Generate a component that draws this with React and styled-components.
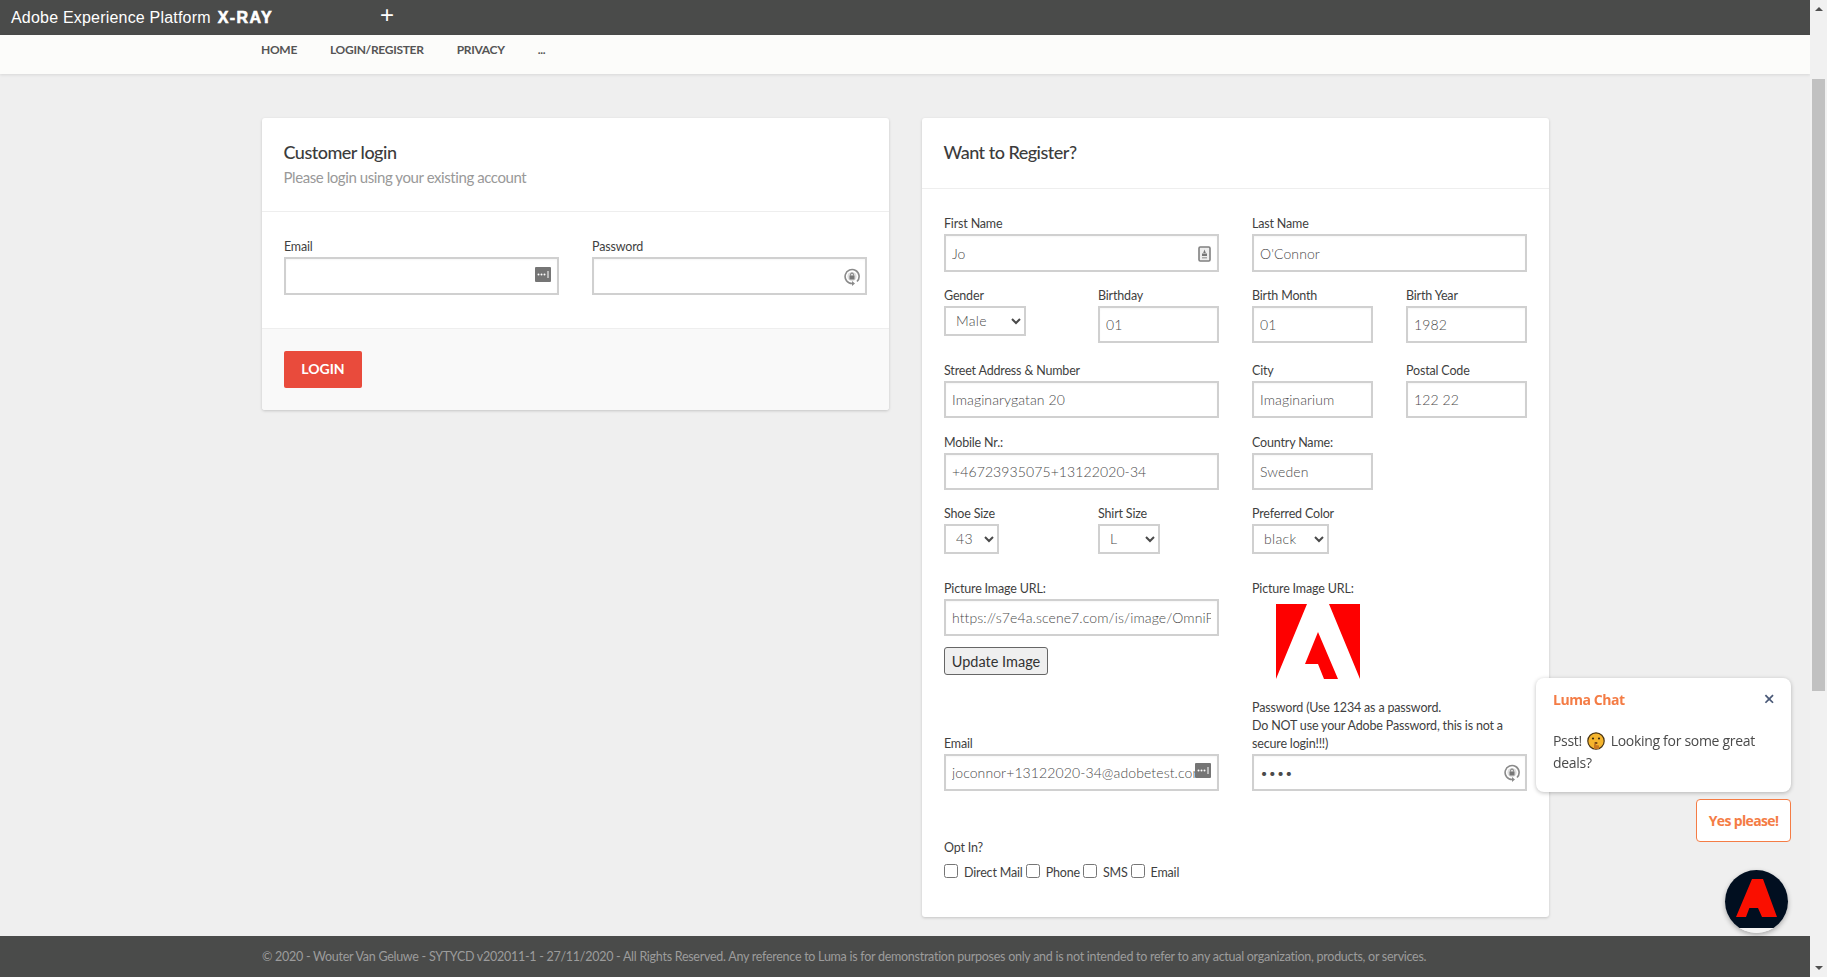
import React from "react";
import styled, { createGlobalStyle } from "styled-components";

const GlobalStyle = createGlobalStyle`
  html, body {
    margin: 0;
    height: 100%;
    overflow: hidden;
  }
  * {
    box-sizing: border-box;
  }
  body {
    font-family: "Lato", "Open Sans", sans-serif;
    background: #efefef;
  }
`;

const Shell = styled.div`
  display: flex;
  height: 100vh;
`;

const Main = styled.div`
  flex: 1;
  min-width: 0;
  display: flex;
  flex-direction: column;
`;

const TopBar = styled.div`
  height: 35px;
  flex: none;
  background: #4a4b4a;
  color: #fff;
  display: flex;
  align-items: center;
  padding-left: 11px;
  font-family: "Liberation Sans", sans-serif;
  font-size: 16px;
  letter-spacing: 0.2px;
  white-space: pre;
`;

const XRay = styled.b`
  margin-left: 7px;
  letter-spacing: 1.4px;
  -webkit-text-stroke: 0.6px #fff;
`;

const PlusIcon = styled.span`
  margin-left: 107px;
  margin-top: -6px;
  font-size: 24px;
  font-weight: 300;
  line-height: 1;
`;

const Nav = styled.nav`
  height: 39px;
  flex: none;
  background: #fcfcfa;
  box-shadow: 0 1px 3px rgba(0, 0, 0, 0.1);
  padding: 7px 0 0 261px;
  display: flex;
  gap: 33px;
  position: relative;
`;

const NavLink = styled.a`
  font-size: 12px;
  font-weight: 700;
  line-height: 16px;
  letter-spacing: -0.3px;
  color: #555;
`;

const Content = styled.main`
  flex: 1;
  display: flex;
  align-items: flex-start;
  gap: 33px;
  padding: 44px 0 0 262px;
`;

const Card = styled.section`
  width: 627px;
  flex: none;
  background: #fff;
  border-radius: 3px;
  box-shadow: 0 1px 3px rgba(0, 0, 0, 0.18);
`;

const CardHeader = styled.header`
  height: ${p => p.$height}px;
  padding: 22px 22px 0 21.5px;
  border-bottom: 1px solid #eee;
`;

const CardTitle = styled.h2`
  margin: 0;
  font-size: 18px;
  font-weight: 500;
  line-height: 24px;
  color: #3c3c3c;
  letter-spacing: -0.5px;
`;

const CardSub = styled.p`
  margin: 2px 0 0;
  font-size: 15px;
  line-height: 22px;
  color: #999;
  letter-spacing: -0.42px;
`;

const LoginBody = styled.div`
  padding: 25px 22px 33px;
  display: grid;
  grid-template-columns: 275px 275px;
  gap: 33px;
`;

const LoginFooter = styled.div`
  height: 82px;
  padding: 22px 22px 0;
  background: #f9f9f9;
  border-top: 1px solid #eee;
  border-radius: 0 0 3px 3px;
`;

const LoginButton = styled.button`
  width: 78px;
  height: 37px;
  background: #e94b3c;
  color: #fff;
  border: 0;
  border-radius: 2px;
  font-family: inherit;
  font-size: 14px;
  font-weight: 700;
  padding: 0 0 3px;
`;

const RegisterBody = styled.form`
  padding: 25px 22px 0;
  height: 728px;
`;

const FormRow = styled.div`
  display: grid;
  grid-template-columns: repeat(4, 121px);
  column-gap: 33px;
  align-items: ${p => p.$align || "start"};
  margin-top: ${p => p.$top || 0}px;
`;

const Field = styled.div`
  grid-column: span ${p => p.$span || 1};
  position: relative;
`;

const Label = styled.label`
  display: block;
  font-size: 12.5px;
  line-height: 18px;
  letter-spacing: -0.17px;
  color: #3f3f3f;
  padding-top: 1px;
  margin-bottom: 1px;
`;

const TextInput = styled.input`
  display: block;
  width: 100%;
  height: ${p => p.$h || 38}px;
  border: 2px solid #d0d0d0;
  background: #fff;
  padding: 0 6px;
  font-family: inherit;
  font-size: 14px;
  font-weight: 300;
  letter-spacing: 0.1px;
  color: #4a4a4a;
  outline: none;
  box-shadow: inset 0 1px 2px rgba(0, 0, 0, 0.04);
`;

const Select = styled.select`
  display: block;
  width: ${p => p.$w}px;
  height: 30px;
  border: 2px solid #d0d0d0;
  border-radius: 0;
  background: #fff;
  padding: 0 0 2px 6px;
  font-family: inherit;
  font-size: 14px;
  font-weight: 300;
  letter-spacing: 0.3px;
  color: #4a4a4a;
`;

const UpdateButton = styled.button`
  display: block;
  width: 104px;
  height: 28px;
  margin-top: 11px;
  padding: 0;
  border: 1px solid #666;
  border-radius: 3px;
  background: #efefef;
  font-family: inherit;
  font-size: 14.5px;
  color: #333;
`;

const LogoFrame = styled.div`
  padding: 5px 0 0 24px;
  line-height: 0;
`;

const InputIcon = styled.svg`
  position: absolute;
  right: ${p => p.$right}px;
  bottom: ${p => p.$bottom}px;
`;

const Checks = styled.div`
  display: flex;
  align-items: center;
  font-size: 12.5px;
  letter-spacing: -0.17px;
  color: #3f3f3f;
  height: 28px;
`;

const Check = styled.input`
  width: 14px;
  height: 14px;
  margin: -3px 6px 0 ${p => (p.$first ? 0 : 3)}px;
`;

const Footer = styled.footer`
  height: 41px;
  flex: none;
  background: #4a4b4a;
  color: #9c9c9c;
  display: flex;
  align-items: center;
  padding-left: 262px;
  font-size: 12.5px;
  letter-spacing: -0.27px;
`;

const ScrollTrack = styled.div`
  width: 17px;
  flex: none;
  background: #f1f1f1;
  display: flex;
  flex-direction: column;
  align-items: center;
  justify-content: space-between;
  padding: 7px 0;
  position: relative;
`;

const ScrollThumb = styled.div`
  position: absolute;
  left: 2px;
  top: 79px;
  width: 13px;
  height: 612px;
  background: #c1c1c1;
`;

const Arrow = styled.div`
  width: 0;
  height: 0;
  border-left: 4px solid transparent;
  border-right: 4px solid transparent;
  ${p => (p.$down ? "border-top: 4px solid #505050;" : "border-bottom: 4px solid #505050;")}
`;

const ChatPopup = styled.aside`
  position: fixed;
  left: 1536px;
  top: 678px;
  width: 255px;
  height: 114px;
  background: #fff;
  border-radius: 8px;
  box-shadow: 0 1px 4px rgba(0, 0, 0, 0.25);
  padding: 13px 17px;
  font-family: "Open Sans", sans-serif;
`;

const ChatTitle = styled.div`
  font-size: 14px;
  font-weight: 700;
  line-height: 18px;
  color: #f47c45;
  letter-spacing: -0.45px;
  width: 180px;
`;

const ChatClose = styled.span`
  position: absolute;
  top: 11px;
  right: 16px;
  font-size: 20px;
  line-height: 20px;
  color: #4b5a78;
  font-weight: 600;
`;

const ChatText = styled.p`
  margin: 21px 0 0;
  font-size: 14px;
  line-height: 22px;
  color: #4a4a4a;
  letter-spacing: -0.3px;
`;

const Shush = styled.svg`
  vertical-align: -4px;
  margin: 0 2px;
`;

const YesButton = styled.button`
  position: fixed;
  left: 1696px;
  top: 799px;
  width: 95px;
  height: 43px;
  background: #fff;
  border: 1px solid #f47c45;
  border-radius: 4px;
  color: #f47c45;
  font-family: "Open Sans", sans-serif;
  font-size: 14px;
  font-weight: 700;
  letter-spacing: -0.65px;
  padding: 0;
`;

const ChatBubble = styled.div`
  position: fixed;
  left: 1725px;
  top: 870px;
  width: 63px;
  height: 63px;
  border-radius: 50%;
  overflow: hidden;
  background: linear-gradient(#010f20 0 92%, #f4f4f4 92%);
  box-shadow: 0 2px 5px rgba(0, 0, 0, 0.3);
`;

function EmailIcon() {
  return (
    <InputIcon $right={8} $bottom={13} width="16" height="15" viewBox="0 0 16 15">
      <rect width="16" height="15" rx="1" fill="#757575" />
      <circle cx="3.5" cy="7.5" r="1" fill="#fff" />
      <circle cx="6.5" cy="7.5" r="1" fill="#fff" />
      <circle cx="9.5" cy="7.5" r="1" fill="#fff" />
      <rect x="12.5" y="4" width="1" height="7" fill="#fff" />
    </InputIcon>
  );
}

function LockIcon() {
  return (
    <InputIcon $right={7} $bottom={9} width="16" height="18" viewBox="0 0 16 18">
      <path d="M8 15.5a7 7 0 1 1 5-2" fill="none" stroke="#8a8a8a" strokeWidth="1.6" />
      <path d="M8 13l3 2.5-3 2.5z" fill="#8a8a8a" />
      <circle cx="8" cy="8.5" r="4.6" fill="#ddd" />
      <rect x="5.5" y="7.5" width="5" height="4" fill="#777" />
      <path d="M6.5 7.5V6.5a1.5 1.5 0 0 1 3 0v1" fill="none" stroke="#777" />
    </InputIcon>
  );
}

function ContactIcon() {
  return (
    <InputIcon $right={8} $bottom={10} width="13" height="16" viewBox="0 0 13 16">
      <rect x="1" y="1" width="11" height="14" rx="1.2" fill="#eee" stroke="#808080" strokeWidth="1.6" />
      <path d="M6.5 3.5l1.3 3.5H5.2z" fill="#777" />
      <rect x="4" y="7.5" width="5" height="2.5" fill="#777" />
      <rect x="4" y="11" width="5" height="1.5" fill="#aaa" />
    </InputIcon>
  );
}

function AdobeLogo() {
  return (
    <svg width="84" height="75" viewBox="0 0 84 75">
      <path d="M0 0h31L0 75zM53 0h31v75zM42 28l20 47H48l-6-15H29z" fill="#fe0000" />
    </svg>
  );
}

function ShushFace() {
  return (
    <Shush width="18" height="18" viewBox="0 0 18 18">
      <circle cx="9" cy="9" r="8.2" fill="#f5b52e" stroke="#4a3514" strokeWidth="1.2" />
      <circle cx="6" cy="6.5" r="1.1" fill="#3a2a10" />
      <circle cx="12" cy="6.5" r="1.1" fill="#3a2a10" />
      <ellipse cx="9" cy="11" rx="1.6" ry="1.1" fill="#6b3d12" />
      <path d="M7 17v-4.5a1 1 0 0 1 2 0V13l3 .5V17z" fill="#c9791f" />
    </Shush>
  );
}

export default function App() {
  return (
    <>
      <GlobalStyle />
      <Shell>
        <Main>
          <TopBar>
            Adobe Experience Platform<XRay>X-RAY</XRay>
            <PlusIcon>+</PlusIcon>
          </TopBar>
          <Nav>
            <NavLink>HOME</NavLink>
            <NavLink>LOGIN/REGISTER</NavLink>
            <NavLink>PRIVACY</NavLink>
            <NavLink>...</NavLink>
          </Nav>
          <Content>
            <Card>
              <CardHeader $height={94}>
                <CardTitle>Customer login</CardTitle>
                <CardSub>Please login using your existing account</CardSub>
              </CardHeader>
              <LoginBody>
                <Field>
                  <Label>Email</Label>
                  <TextInput readOnly />
                  <EmailIcon />
                </Field>
                <Field>
                  <Label>Password</Label>
                  <TextInput readOnly type="password" />
                  <LockIcon />
                </Field>
              </LoginBody>
              <LoginFooter>
                <LoginButton>LOGIN</LoginButton>
              </LoginFooter>
            </Card>
            <Card>
              <CardHeader $height={71}>
                <CardTitle>Want to Register?</CardTitle>
              </CardHeader>
              <RegisterBody>
                <FormRow>
                  <Field $span={2}>
                    <Label>First Name</Label>
                    <TextInput readOnly value="Jo" />
                    <ContactIcon />
                  </Field>
                  <Field $span={2}>
                    <Label>Last Name</Label>
                    <TextInput readOnly value="O'Connor" />
                  </Field>
                </FormRow>
                <FormRow $top={14}>
                  <Field>
                    <Label>Gender</Label>
                    <Select $w={82} defaultValue="Male">
                      <option>Male</option>
                    </Select>
                  </Field>
                  <Field>
                    <Label>Birthday</Label>
                    <TextInput $h={37} readOnly value="01" />
                  </Field>
                  <Field>
                    <Label>Birth Month</Label>
                    <TextInput $h={37} readOnly value="01" />
                  </Field>
                  <Field>
                    <Label>Birth Year</Label>
                    <TextInput $h={37} readOnly value="1982" />
                  </Field>
                </FormRow>
                <FormRow $top={18}>
                  <Field $span={2}>
                    <Label>Street Address &amp; Number</Label>
                    <TextInput $h={37} readOnly value="Imaginarygatan 20" />
                  </Field>
                  <Field>
                    <Label>City</Label>
                    <TextInput $h={37} readOnly value="Imaginarium" />
                  </Field>
                  <Field>
                    <Label>Postal Code</Label>
                    <TextInput $h={37} readOnly value="122 22" />
                  </Field>
                </FormRow>
                <FormRow $top={15}>
                  <Field $span={2}>
                    <Label>Mobile Nr.:</Label>
                    <TextInput $h={37} readOnly value="+46723935075+13122020-34" />
                  </Field>
                  <Field>
                    <Label>Country Name:</Label>
                    <TextInput $h={37} readOnly value="Sweden" />
                  </Field>
                </FormRow>
                <FormRow $top={14}>
                  <Field>
                    <Label>Shoe Size</Label>
                    <Select $w={55} defaultValue="43">
                      <option>43</option>
                    </Select>
                  </Field>
                  <Field>
                    <Label>Shirt Size</Label>
                    <Select $w={62} defaultValue="L">
                      <option>L</option>
                    </Select>
                  </Field>
                  <Field>
                    <Label>Preferred Color</Label>
                    <Select $w={77} defaultValue="black">
                      <option>black</option>
                    </Select>
                  </Field>
                </FormRow>
                <FormRow $top={25}>
                  <Field $span={2}>
                    <Label>Picture Image URL:</Label>
                    <TextInput $h={37} readOnly value="https://s7e4a.scene7.com/is/image/OmniPlusPictures" />
                    <UpdateButton type="button">Update Image</UpdateButton>
                  </Field>
                  <Field $span={2}>
                    <Label>Picture Image URL:</Label>
                    <LogoFrame>
                      <AdobeLogo />
                    </LogoFrame>
                  </Field>
                </FormRow>
                <FormRow $top={19} $align="end">
                  <Field $span={2}>
                    <Label>Email</Label>
                    <TextInput $h={37} readOnly value="joconnor+13122020-34@adobetest.com" />
                    <EmailIcon />
                  </Field>
                  <Field $span={2}>
                    <Label>
                      Password (Use 1234 as a password.
                      <br />
                      Do NOT use your Adobe Password, this is not a secure login!!!)
                    </Label>
                    <TextInput $h={37} readOnly type="password" value="1234" />
                    <LockIcon />
                  </Field>
                </FormRow>
                <FormRow $top={47}>
                  <Field $span={4}>
                    <Label>Opt In?</Label>
                    <Checks>
                      <Check type="checkbox" $first />
                      Direct Mail
                      <Check type="checkbox" />
                      Phone
                      <Check type="checkbox" />
                      SMS
                      <Check type="checkbox" />
                      Email
                    </Checks>
                  </Field>
                </FormRow>
              </RegisterBody>
            </Card>
          </Content>
          <Footer>
            © 2020 - Wouter Van Geluwe - SYTYCD v202011-1 - 27/11/2020 - All Rights Reserved. Any reference to Luma is for demonstration purposes only and is not intended to refer to any actual organization, products, or services.
          </Footer>
        </Main>
        <ScrollTrack>
          <Arrow />
          <ScrollThumb />
          <Arrow $down />
        </ScrollTrack>
      </Shell>
      <ChatPopup>
        <ChatTitle>Luma Chat</ChatTitle>
        <ChatClose>×</ChatClose>
        <ChatText>
          Psst! <ShushFace /> Looking for some great deals?
        </ChatText>
      </ChatPopup>
      <YesButton>Yes please!</YesButton>
      <ChatBubble>
        <svg width="63" height="63" viewBox="0 0 63 63">
          <path d="M27 9h11l14 38H37l-4-9h-9l6-15-9 24H11z" fill="#fa0f00" />
        </svg>
      </ChatBubble>
    </>
  );
}
